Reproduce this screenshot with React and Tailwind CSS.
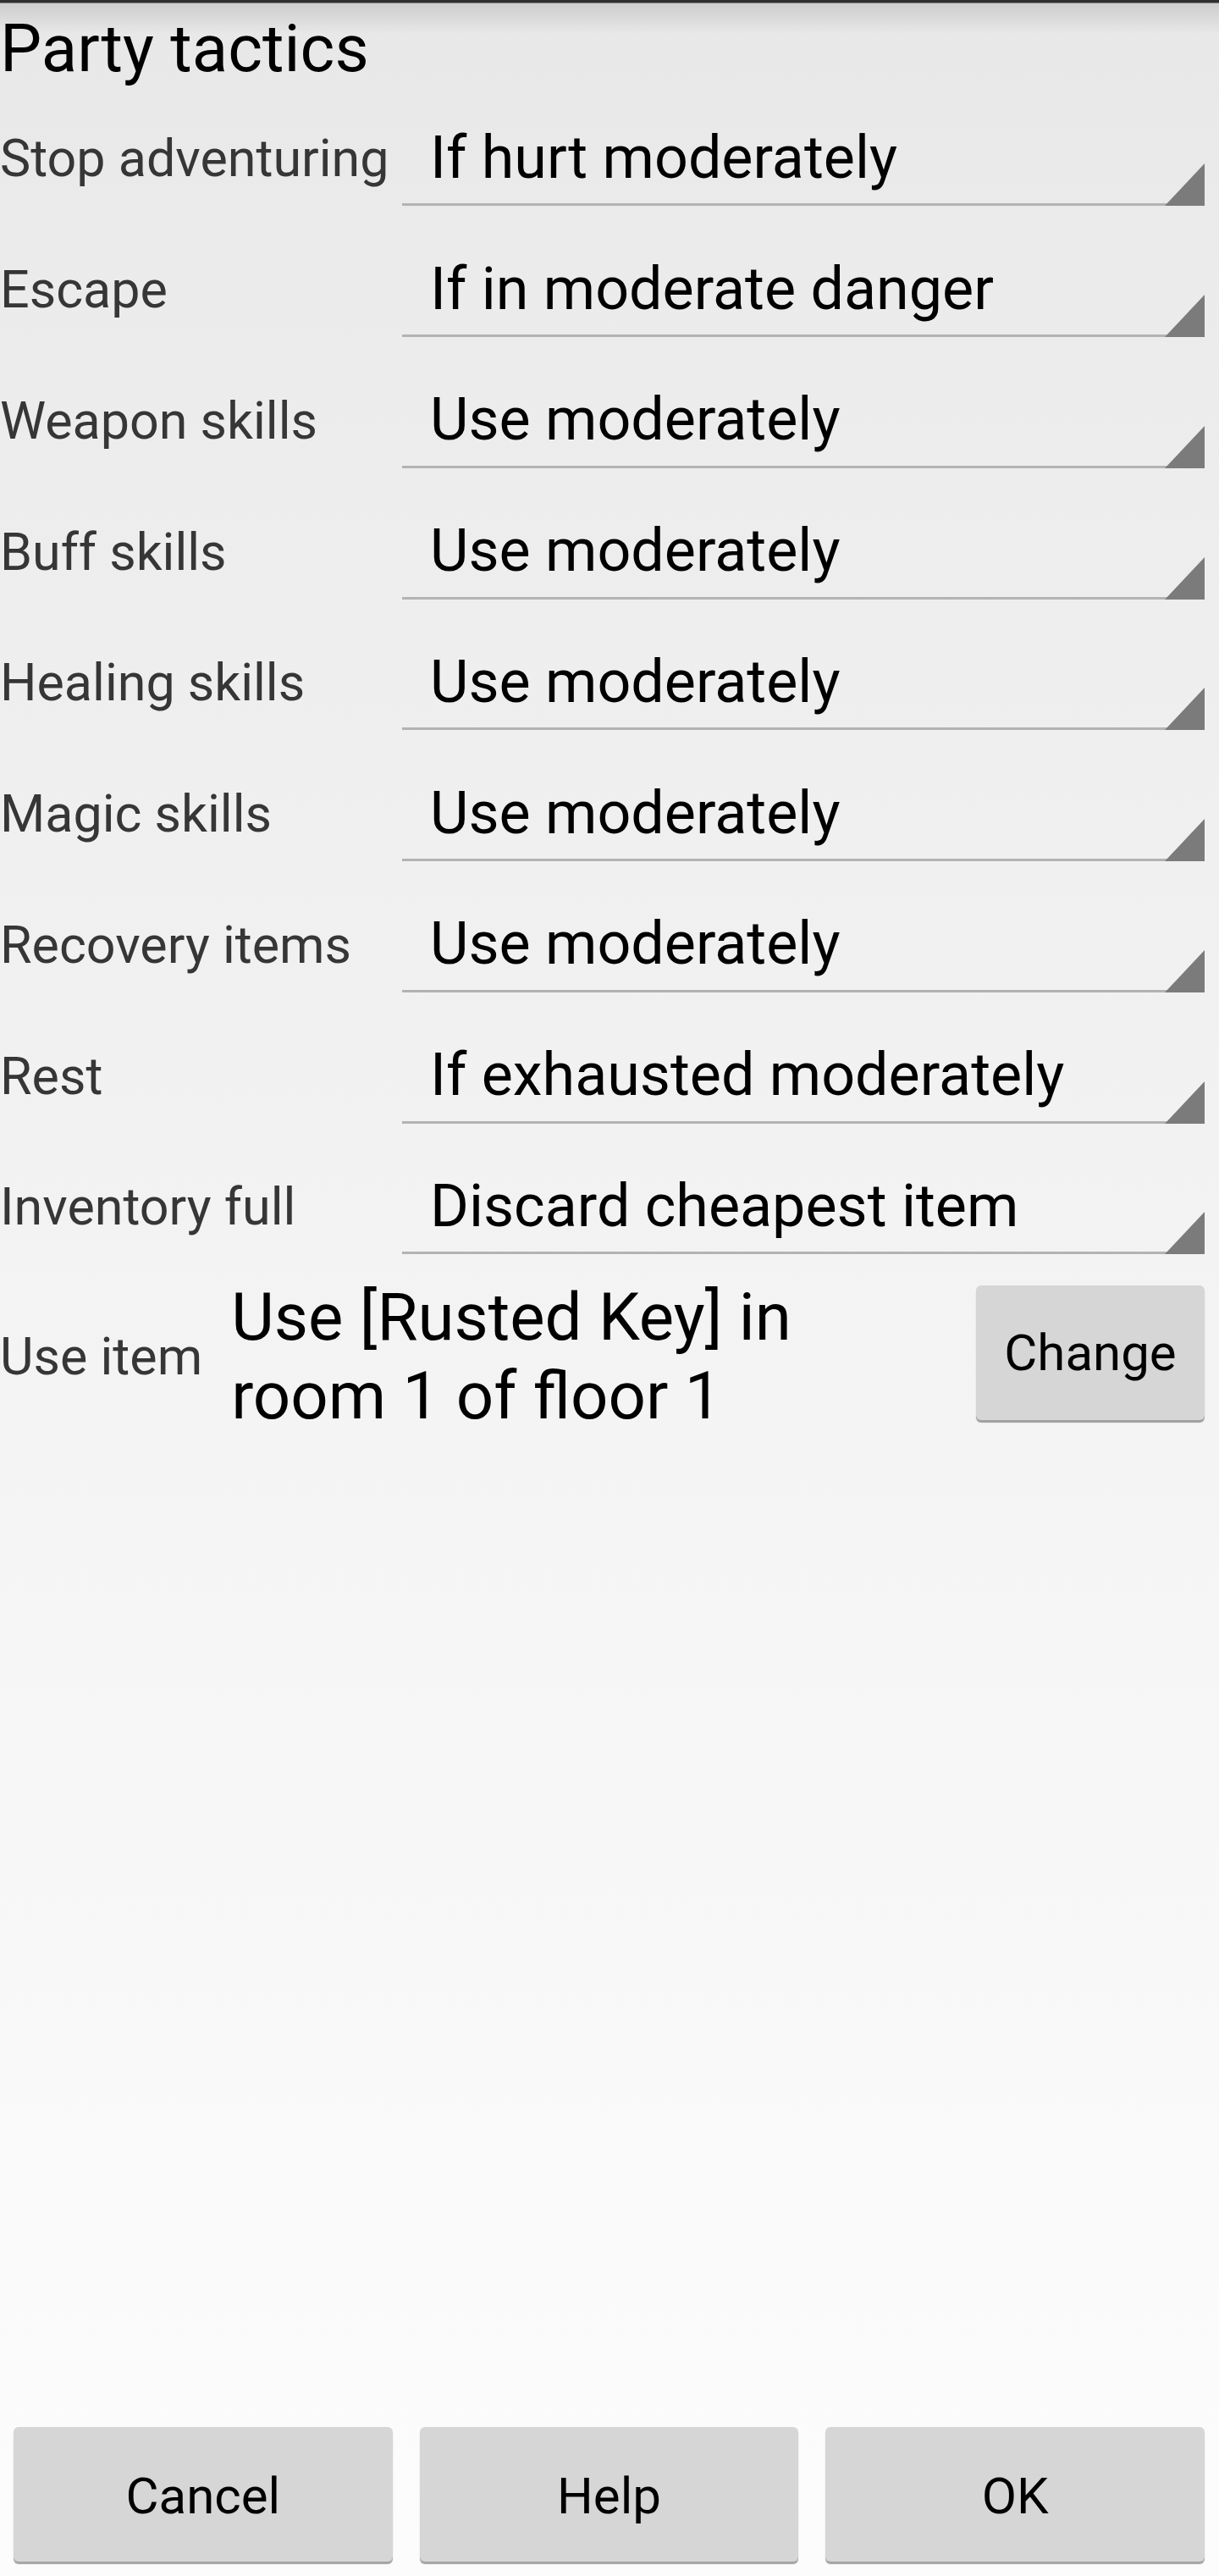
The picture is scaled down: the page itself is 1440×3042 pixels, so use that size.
const ROWS = [
  { label: 'Stop adventuring', value: 'If hurt moderately' },
  { label: 'Escape',           value: 'If in moderate danger' },
  { label: 'Weapon skills',    value: 'Use moderately' },
  { label: 'Buff skills',      value: 'Use moderately' },
  { label: 'Healing skills',   value: 'Use moderately' },
  { label: 'Magic skills',     value: 'Use moderately' },
  { label: 'Recovery items',   value: 'Use moderately' },
  { label: 'Rest',             value: 'If exhausted moderately' },
  { label: 'Inventory full',   value: 'Discard cheapest item' },
];

/* ── shared button class ─────────────────────────────────────── */
const button = `
  h-[159px]
  rounded-[6px]
  bg-[#d6d6d6]
  shadow-[0_3px_1px_rgba(0,0,0,0.35)]
  text-[60px] text-black
  leading-none
`;

const Spinner = ({ label, value }) => (
  <div className="flex h-[154.75px] items-center pr-[17px]">
    <div className="w-[475px] text-[61px] leading-[70px] text-[#363636]">
      {label}
    </div>

    <div className="relative flex h-[112px] flex-1 items-center border-b-[3px] border-[#b3b3b3] pl-[33px] text-[70px] leading-[82px] text-black">
      {value}
      <svg
        className="absolute right-0 bottom-[-3px]"
        width="47"
        height="50"
        viewBox="0 0 47 50"
      >
        <polygon points="0,50 47,0 47,50" fill="#7b7b7b" />
      </svg>
    </div>
  </div>
);

const App = () => {
  return (
    <div
      className="
        flex min-h-[3042px] w-[1440px] flex-col
        font-['Roboto',sans-serif]
        bg-[linear-gradient(to_bottom,#2e2e2e_0px,#2e2e2e_3px,#cdcdcd_4px,#e8e8e8_40px,#ebebeb_300px,#f3f3f3_1500px,#fbfbfb_2800px,#fcfcfc_100%)]
      "
    >
      {/* ── Title ── */}
      <div className="h-[110px] pt-[11px] text-[78px] leading-[94px] text-black">
        Party tactics
      </div>

      {/* ── Tactic rows ── */}
      {ROWS.map((r) => (
        <Spinner key={r.label} label={r.label} value={r.value} />
      ))}

      {/* ── Use item ── */}
      <div className="flex items-center pt-[6px]">
        <div className="pr-[34px] text-[61px] leading-[70px] text-[#363636]">
          Use item
        </div>
        <div className="max-w-[800px] flex-1 text-[78px] leading-[93px] text-black">
          Use [Rusted Key] in room 1 of floor 1
        </div>
        <button className={`${button} ml-auto mr-[17px] w-[270px] -mt-[8px]`}>
          Change
        </button>
      </div>

      <div className="flex-1" />

      {/* ── Footer buttons ── */}
      <div className="flex gap-[32px] pl-[16px] pr-[17px] pb-[17px]">
        <button className={`${button} flex-1 pt-[4px]`}>Cancel</button>
        <button className={`${button} flex-1 pt-[4px]`}>Help</button>
        <button className={`${button} flex-1 pt-[4px]`}>OK</button>
      </div>
    </div>
  );
};

export default App;
